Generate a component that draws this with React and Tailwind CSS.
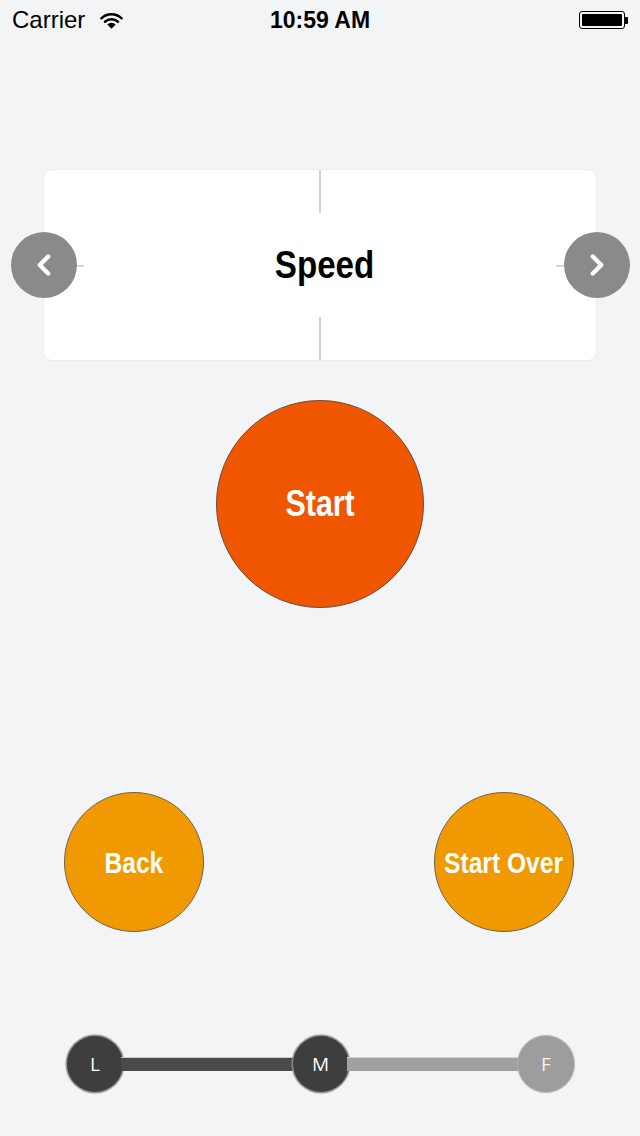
import { ChevronLeft, ChevronRight } from 'lucide-react';

const condensed = { fontFamily: '"Liberation Sans Narrow", "Liberation Sans", Arial, sans-serif' };

function Wifi() {
  return (
    <svg width="23" height="17" viewBox="0 0 24 17">
      <path d="M1.5 6.2 A15 15 0 0 1 22.5 6.2" fill="none" stroke="#000" strokeWidth="2.6" strokeLinecap="round" />
      <path d="M5.2 9.8 A10 10 0 0 1 18.8 9.8" fill="none" stroke="#000" strokeWidth="2.6" strokeLinecap="round" />
      <path d="M12 17 L7.6 12.6 A6.2 6.2 0 0 1 16.4 12.6 Z" fill="#000" />
    </svg>
  );
}

function Battery() {
  return (
    <div className="flex items-center">
      <div className="w-[46px] h-[18px] rounded-[3px] border border-black p-[2px]">
        <div className="w-full h-full bg-black rounded-[1px]" />
      </div>
      <div className="w-[3px] h-[7px] bg-black rounded-r-[1px]" />
    </div>
  );
}

function Knob({ label, light }) {
  return (
    <div
      className={`w-[56px] h-[56px] shrink-0 rounded-full flex items-center justify-center text-[19px] ${
        light ? 'bg-[#9d9d9d] text-[#f4f4f4] shadow-[0_0_1px_1px_#b0b0b0]' : 'bg-[#3e3e3e] text-white shadow-[0_0_1px_1.5px_#8e8e8e]'
      }`}
      style={{ fontFamily: '"Open Sans", "Noto Sans", sans-serif' }}
    >
      {label}
    </div>
  );
}

export default function App() {
  return (
    <div className="w-[640px] h-[1136px] bg-[#f3f4f6] overflow-hidden" style={{ fontFamily: '"Liberation Sans", Arial, sans-serif' }}>
      {/* Status bar */}
      <div className="h-[40px] relative flex items-center pl-[12px] pr-[12px]">
        <div className="flex items-center gap-[15px]">
          <span className="text-[24px] text-black">Carrier</span>
          <Wifi />
        </div>
        <span className="absolute left-0 right-0 text-center text-[23px] font-bold text-black">10:59 AM</span>
        <div className="ml-auto">
          <Battery />
        </div>
      </div>

      {/* Mode card */}
      <div className="relative mt-[129px] mx-[43px] h-[192px] bg-white rounded-[9px] border border-[#ececec] flex flex-col items-center">
        <div className="w-[2px] h-[43px] bg-[#d2d2d2]" />
        <div className="flex-1 flex items-center justify-center pl-[10px]">
          <span className="text-[39px] font-bold text-black scale-x-[0.85] inline-block" style={condensed}>Speed</span>
        </div>
        <div className="w-[2px] h-[43px] bg-[#d2d2d2]" />

        <div className="absolute left-[32px] top-[95px] w-[8px] h-[2px] bg-[#d8d8d8]" />
        <div className="absolute right-[32px] top-[95px] w-[8px] h-[2px] bg-[#d8d8d8]" />
        <div className="absolute left-[-33px] top-[62px] w-[66px] h-[66px] rounded-full bg-[#8a8a8a] flex items-center justify-center">
          <ChevronLeft size={34} color="#fff" strokeWidth={3} />
        </div>
        <div className="absolute right-[-34px] top-[62px] w-[66px] h-[66px] rounded-full bg-[#8a8a8a] flex items-center justify-center">
          <ChevronRight size={34} color="#fff" strokeWidth={3} />
        </div>
      </div>

      {/* Start */}
      <div className="mt-[39px] flex justify-center">
        <button className="w-[208px] h-[208px] rounded-full bg-[#f05500] border border-[#6b4a3a] flex items-center justify-center text-white">
          <span className="text-[37px] font-bold scale-x-[0.82] inline-block" style={condensed}>Start</span>
        </button>
      </div>

      {/* Back / Start Over */}
      <div className="mt-[184px] flex justify-between pl-[64px] pr-[66px]">
        <button className="w-[140px] h-[140px] rounded-full bg-[#f09900] border border-[#6f6250] flex items-center justify-center text-white">
          <span className="text-[30px] font-bold scale-x-[0.82] inline-block" style={condensed}>Back</span>
        </button>
        <button className="w-[140px] h-[140px] rounded-full bg-[#f09900] border border-[#6f6250] flex items-center justify-center text-white">
          <span className="text-[30px] font-bold scale-x-[0.82] inline-block whitespace-nowrap" style={condensed}>Start Over</span>
        </button>
      </div>

      {/* Speed selector */}
      <div className="mt-[104px] flex items-center pl-[67px] pr-[66px]">
        <Knob label="L" />
        <div className="flex-1 h-[14px] bg-[#4a4a4a] border-t border-[#c8c8c8] -mx-[2px]" />
        <Knob label="M" />
        <div className="flex-1 h-[14px] bg-[#a0a0a0] border-t border-[#d4d4d4] -mx-[2px]" />
        <Knob label="F" light />
      </div>
    </div>
  );
}
